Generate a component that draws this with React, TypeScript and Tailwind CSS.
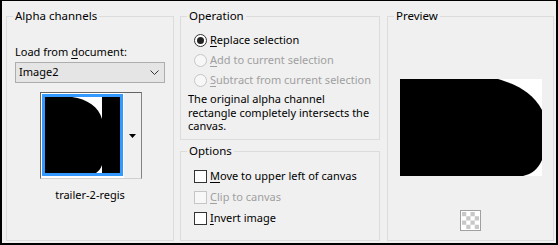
import React from "react";

const font = { fontFamily: '"Noto Sans", "Liberation Sans", sans-serif' };

function Key({ children }: { children: React.ReactNode }) {
  return <span className="underline underline-offset-[2px]">{children}</span>;
}

function Radio({ checked, disabled, children }: { checked?: boolean; disabled?: boolean; children: React.ReactNode }) {
  return (
    <div className="flex items-center h-[20px]">
      <span
        className={`w-[13px] h-[13px] rounded-full border flex items-center justify-center ${
          disabled ? "border-[#c6c6c6] bg-[#f7f7f7]" : "border-[#333333] bg-white"
        }`}
      >
        {checked && <span className="w-[7px] h-[7px] rounded-full bg-[#222222]" />}
      </span>
      <span className={`ml-[3px] ${disabled ? "text-[#a0a0a0]" : "text-black"}`}>{children}</span>
    </div>
  );
}

function Check({ disabled, children }: { disabled?: boolean; children: React.ReactNode }) {
  return (
    <div className="flex items-center h-[21px]">
      <span
        className={`w-[13px] h-[13px] border ${
          disabled ? "border-[#c6c6c6] bg-[#f7f7f7]" : "border-[#333333] bg-white"
        }`}
      />
      <span className={`ml-[3px] ${disabled ? "text-[#a0a0a0]" : "text-black"}`}>{children}</span>
    </div>
  );
}

function Group({ title, className, children }: { title: string; className: string; children: React.ReactNode }) {
  return (
    <fieldset className={`border border-[#dcdcdc] ${className}`}>
      <legend className="ml-[6px] px-[2px] leading-[16px] text-[11.5px] text-black">{title}</legend>
      {children}
    </fieldset>
  );
}

export default function App() {
  return (
    <div
      className="w-[558px] h-[245px] bg-[#f0f0f0] border-black border-l-2 border-t border-r-2 border-b-2 flex pl-[4px] pt-[7px] text-[11px] text-black"
      style={font}
    >
      {/* Alpha channels */}
      <Group title="Alpha channels" className="w-[168px] h-[233px]">
        <div className="pl-[8px] pt-[20px]">
          <div className="leading-[16px]">
            Load from <Key>d</Key>ocument:
          </div>
          <div className="mt-[2px] w-[150px] h-[21px] bg-[#e5e5e5] border border-[#adadad] flex items-center justify-between pl-[3px] pr-[5px]">
            <span>Image2</span>
            <svg width="9" height="6" viewBox="0 0 9 6">
              <polyline points="0.5,0.5 4.5,4.5 8.5,0.5" fill="none" stroke="#333" strokeWidth="1" />
            </svg>
          </div>
          <div className="mt-[9px] ml-[25px] w-[102px] h-[87px] flex border border-t-[#646464] border-l-[#646464] border-r-[#828282] border-b-[#d0d0d0]">
            <div className="bg-white p-[1px] h-full">
              <div className="w-[81px] h-[82px] border-[3px] border-[#3399ff] bg-black">
                <svg width="75" height="76" viewBox="0 0 75 76" className="block">
                  <rect width="75" height="76" fill="#000" />
                  <path d="M27 0 H57 V22 C54 10 42 2 27 0 Z" fill="#fff" />
                  <path d="M57 76 H51 C54 74 56 71 57 68 Z" fill="#fff" />
                </svg>
              </div>
            </div>
            <div className="flex-1 flex items-center justify-center bg-[#f0f0f0]">
              <svg width="7" height="4" viewBox="0 0 7 4">
                <polygon points="0,0 7,0 3.5,4" fill="#000" />
              </svg>
            </div>
          </div>
        </div>
        <div className="mt-[8px] text-center leading-[16px]">trailer-2-regis</div>
      </Group>

      <div className="ml-[6px] w-[200px] flex flex-col">
        <Group title="Operation" className="h-[132px]">
          <div className="pl-[13px] pt-[6px]">
            <Radio checked>
              <Key>R</Key>eplace selection
            </Radio>
            <Radio disabled>
              <Key>A</Key>dd to current selection
            </Radio>
            <Radio disabled>
              <Key>S</Key>ubtract from current selection
            </Radio>
          </div>
          <div className="pl-[7px] mt-[2px] leading-[13.5px]">
            The original alpha channel
            <br />
            rectangle completely intersects the
            <br />
            canvas.
          </div>
        </Group>
        <Group title="Options" className="mt-[3px] h-[98px]">
          <div className="pl-[13px] pt-[7px]">
            <Check>
              <Key>M</Key>ove to upper left of canvas
            </Check>
            <Check disabled>
              <Key>C</Key>lip to canvas
            </Check>
            <Check>
              <Key>I</Key>nvert image
            </Check>
          </div>
        </Group>
      </div>

      <Group title="Preview" className="ml-[7px] w-[167px] h-[233px]">
        <div className="flex flex-col items-center pt-[55px]">
          <svg width="142" height="97" viewBox="0 0 142 97" className="block">
            <rect width="142" height="97" fill="#fff" />
            <path d="M0 0 H98 C112 4 132 12 142 31 V81 C138 90 132 95 123 97 H0 Z" fill="#000" />
          </svg>
          <svg width="21" height="21" viewBox="0 0 21 21" className="block mt-[34px]">
            <rect x="0.5" y="0.5" width="20" height="20" fill="#fff" stroke="#a0a0a0" />
            {[0, 1, 2, 3].map((r) =>
              [0, 1, 2, 3].map((c) =>
                (r + c) % 2 === 0 ? (
                  <rect key={`${r}-${c}`} x={2 + c * 4.25} y={2 + r * 4.25} width="4.25" height="4.25" fill="#c8c8c8" />
                ) : null
              )
            )}
          </svg>
        </div>
      </Group>
    </div>
  );
}
